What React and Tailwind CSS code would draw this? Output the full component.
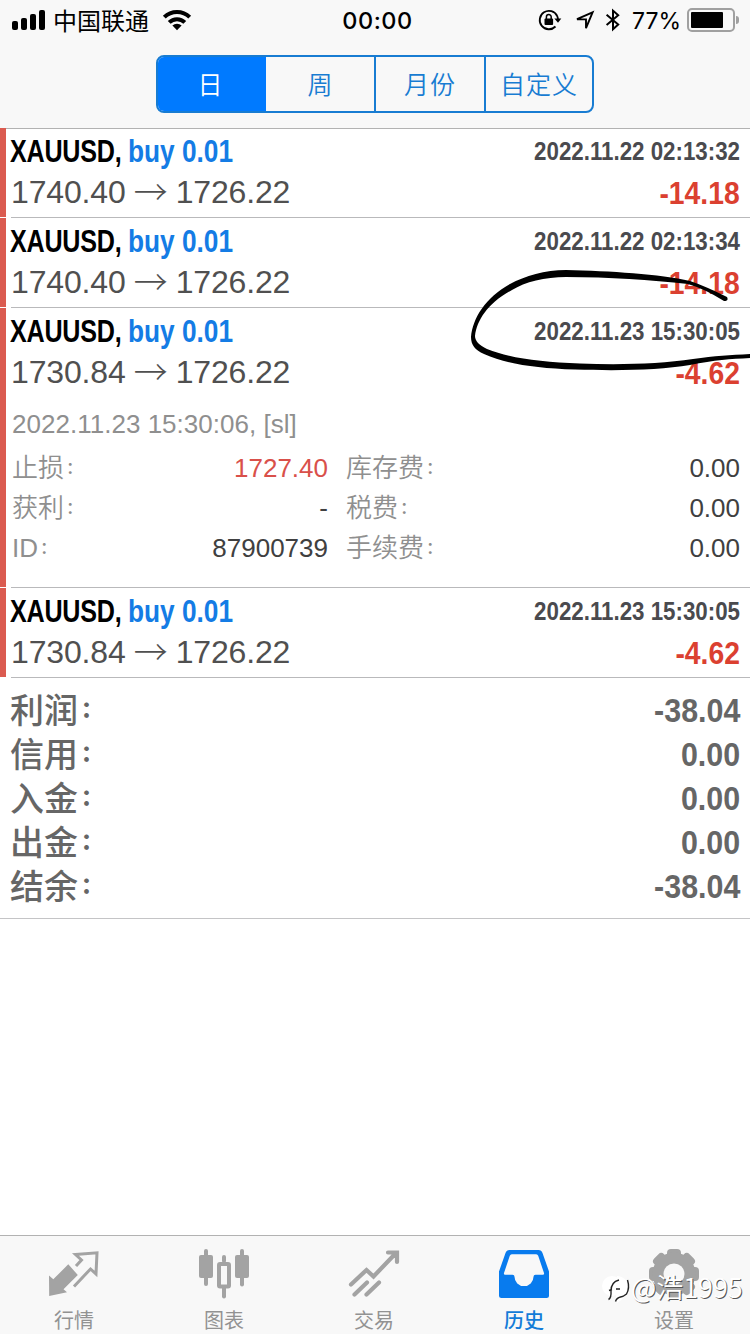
import React from 'react';

const CJK = "font-['Noto_Sans_CJK_SC',sans-serif]";
const LATIN = "font-['Liberation_Sans','Noto_Sans_CJK_SC',sans-serif]";

function StatusBar() {
  return (
    <div className="flex h-[40px] items-center pl-[12px] pr-[11px] text-black">
      <div className="flex flex-1 items-center">
        <div className="flex h-[20px] items-end gap-[3px]">
          <i className="h-[9px] w-[6px] rounded-[2px] bg-black" />
          <i className="h-[12px] w-[6px] rounded-[2px] bg-black" />
          <i className="h-[16px] w-[6px] rounded-[2px] bg-black" />
          <i className="h-[20px] w-[6px] rounded-[2px] bg-black" />
        </div>
        <span className={`ml-[8px] text-[24px] leading-[40px] ${CJK}`}>中国联通</span>
        <svg className="ml-[13px]" width="30" height="22" viewBox="0 0 30 22" fill="none" stroke="#000" strokeWidth="4">
          <path d="M2.3 8.2a18 18 0 0 1 25.4 0" />
          <path d="M7.2 13.4a11 11 0 0 1 15.6 0" />
          <path d="M10.4 16.5a6.6 6.6 0 0 1 9.2 0L15 21.3Z" fill="#000" stroke="none" />
        </svg>
      </div>
      <span className="ml-[4px] pt-[2px] font-[Inter,sans-serif] text-[23.5px] font-medium leading-[40px] tracking-[0.5px]">00:00</span>
      <div className="flex flex-1 items-center justify-end">
        <svg width="24" height="22" viewBox="0 0 24 22" fill="none" stroke="#000" strokeWidth="1.8">
          <path d="M19.2 7A9.2 9.2 0 1 0 17.5 17.5M19.2 7q.8 1.8.8 4" />
          <path d="M16.3 9.4h7L20 13.8Z" fill="#000" stroke="none" />
          <rect x="6.5" y="9.5" width="8.6" height="6.5" rx="1" fill="#000" stroke="none" />
          <path d="M8.4 10V8a2.4 2.4 0 0 1 4.8 0v2" strokeWidth="1.5" />
        </svg>
        <svg className="ml-[13px]" width="20" height="20" viewBox="0 0 20 20" fill="none" stroke="#000" strokeWidth="1.9" strokeLinejoin="miter">
          <path d="M2 9.2 17.6 2.4 11 18.200V9.400Z" />
        </svg>
        <svg className="ml-[10px]" width="16" height="24" viewBox="0 0 16 24" fill="none" stroke="#000" strokeWidth="2">
          <path d="M1.6 6.8 13.2 16.6 8 21.2V2.6l5.2 4.6L1.6 17" />
        </svg>
        <span className="ml-[11px] pt-[2px] font-[Inter,sans-serif] text-[23px] leading-[40px]">77%</span>
        <div className="ml-[6px] flex h-[24px] w-[48px] rounded-[5px] border-2 border-[#a0a0a0] p-[2px]">
          <i className="h-full w-[32px] rounded-[1px] bg-black" />
        </div>
        <i className="ml-[1px] h-[8px] w-[3px] rounded-r-full bg-[#a0a0a0]" />
      </div>
    </div>
  );
}

function Segments() {
  return (
    <div className={`mx-auto mt-[15px] flex h-[58px] w-[438px] overflow-hidden rounded-[8px] border-2 border-[#187cd2] text-[25px] font-[350] leading-[52px] text-[#187cd2] ${CJK}`}>
      <span className="w-[108px] shrink-0 bg-[#007aff] pr-[4px] text-center text-white">日</span>
      <span className="w-[108px] shrink-0 text-center">周</span>
      <span className="w-[110px] shrink-0 border-l-2 border-[#187cd2] text-center tracking-[1px]">月份</span>
      <span className="w-[108px] shrink-0 border-l-2 border-[#187cd2] text-center tracking-[1px]">自定义</span>
    </div>
  );
}

function Trade({ open, close, time, profit, children }) {
  return (
    <div className="flex">
      <i className="mb-px w-[6px] shrink-0 bg-[#db5b50]" />
      <div className="ml-[5px] flex-1 border-b border-[#b9b9bb]">
        <div className="flex h-[89px] justify-between pr-[10px]">
          <div className="-ml-px pt-[3px]">
            <div className="flex h-[40px] text-[32px] font-bold leading-[40px]">
              <span className="w-[118px] origin-left scale-x-[0.785] whitespace-nowrap tracking-[-0.3px] text-black">XAUUSD,</span>
              <span className="origin-left scale-x-[0.82] whitespace-nowrap text-[#147ce5]">buy 0.01</span>
            </div>
            <div className="flex h-[40px] pl-px text-[32px] leading-[42px] tracking-[-0.15px] text-[#505050]">
              <span>{open}</span>
              <span className="mx-[8px] w-[34px] text-center font-['Noto_Sans_CJK_SC'] text-[34px] font-light leading-[40px]">→</span>
              <span>{close}</span>
            </div>
          </div>
          <div className="flex flex-col items-end pt-[3px] font-bold">
            <span className="origin-right scale-x-[0.858] text-[26px] leading-[40px] text-[#4a4a4e]">{time}</span>
            <span className="origin-right scale-x-[0.885] text-[32px] leading-[44px] text-[#db4030]">{profit}</span>
          </div>
        </div>
        {children}
      </div>
    </div>
  );
}

function Field({ name, value, tone }) {
  return (
    <div className="flex h-[40px] justify-between text-[26px] leading-[40px]">
      <span className="flex font-[350] text-[#8f8f8f]">
        {name}
        <b className="ml-[2px] pt-[4px] text-[17px] font-medium leading-[34px]">：</b>
      </span>
      <span className={tone}>{value}</span>
    </div>
  );
}

function Details() {
  return (
    <div className="h-[190px] pl-px pr-[10px] pt-[7px]">
      <div className="text-[26px] leading-[40px] tracking-[0.02px] text-[#8f8f8f]">2022.11.23 15:30:06, [sl]</div>
      <div className="mt-[4px] flex gap-[18px]">
        <div className="w-[316px]">
          <Field name="止损" value="1727.40" tone="text-[#d9504a]" />
          <Field name="获利" value="-" tone="text-[#404040]" />
          <Field name="ID" value="87900739" tone="text-[#404040]" />
        </div>
        <div className="flex-1">
          <Field name="库存费" value="0.00" tone="text-[#404040]" />
          <Field name="税费" value="0.00" tone="text-[#404040]" />
          <Field name="手续费" value="0.00" tone="text-[#404040]" />
        </div>
      </div>
    </div>
  );
}

const totals = [
  ['利润', '-38.04'],
  ['信用', '0.00'],
  ['入金', '0.00'],
  ['出金', '0.00'],
  ['结余', '-38.04'],
];

function QuotesIcon() {
  return (
    <svg className="shrink-0" width="52" height="50" viewBox="0 0 52 50">
      <path d="M1 26.500 5.300 30.300 20.300 15.300 29.800 26 15.500 40.300 19 43.300 1.200 47Z" fill="#a3a3a3" />
      <path d="M28 17 33.500 11 27.500 5.500 49 3.800 48 25 42.500 20 26 37.500" fill="none" stroke="#a3a3a3" strokeWidth="3" />
    </svg>
  );
}

function CandlesIcon() {
  return (
    <svg className="shrink-0" width="52" height="50" viewBox="0 0 52 50" fill="#a3a3a3">
      <rect x="6" y="0" width="4" height="37" rx="2" />
      <rect x="1" y="6" width="14" height="23" rx="2" />
      <rect x="42" y="0" width="4" height="37.5" rx="2" />
      <rect x="37" y="6" width="14" height="23" rx="2" />
      <rect x="24" y="6" width="4" height="8" rx="2" />
      <rect x="24" y="37" width="4" height="12.500" rx="2" />
      <rect x="21" y="15" width="10" height="22.500" rx="1" fill="none" stroke="#a3a3a3" strokeWidth="4" />
    </svg>
  );
}

function TradeIcon() {
  return (
    <svg className="shrink-0" width="52" height="50" viewBox="0 0 52 50" fill="none" stroke="#a3a3a3" strokeWidth="4.2" strokeLinecap="round">
      <path d="M3 35.500 18.500 21l7 6.500L48 4M40 3.500h9V13M6.500 45.500 19 33.500M18.500 45.500 31 33.500" />
    </svg>
  );
}

function HistoryIcon() {
  return (
    <svg className="shrink-0" width="52" height="50" viewBox="0 0 52 50">
      <path fillRule="evenodd" fill="#087bee" d="M11.500 1h29q3 0 4 3L51 22.500v24q0 2.500-2.500 2.500h-45Q1 49 1 46.500v-24L7.500 4Q8.500 1 11.500 1ZM13.800 5.200q-1.500 0-2 1.500L6 24q-.5 1.800 1.200 1.800h7.300q2 0 2 2a9.500 9.300 0 0 0 19 0q0-2 2-2h7.300q1.700 0 1.200-1.800L40.200 6.700q-.5-1.500-2-1.500Z" />
    </svg>
  );
}

function GearIcon() {
  return (
    <svg className="shrink-0" width="52" height="50" viewBox="0 0 52 50">
      <g fill="#a3a3a3">
        <rect x="19" y="0" width="14" height="50" rx="4" />
        <rect x="19" y="0" width="14" height="50" rx="4" transform="rotate(45 26 25)" />
        <rect x="19" y="0" width="14" height="50" rx="4" transform="rotate(90 26 25)" />
        <rect x="19" y="0" width="14" height="50" rx="4" transform="rotate(135 26 25)" />
        <circle cx="26" cy="25" r="21.500" />
      </g>
      <circle cx="26" cy="25" r="10.500" fill="#f8f8f8" />
    </svg>
  );
}

const tabs = [
  ['行情', QuotesIcon],
  ['图表', CandlesIcon],
  ['交易', TradeIcon],
  ['历史', HistoryIcon],
  ['设置', GearIcon],
];

export default function App() {
  return (
    <div className={`relative flex h-[1334px] w-[750px] flex-col overflow-hidden bg-white ${LATIN}`}>
      <header className="h-[129px] shrink-0 border-b border-[#b2b2b2] bg-[#f8f8f8]">
        <StatusBar />
        <Segments />
      </header>

      <main className="-mt-px flex-1">
        <Trade open="1740.40" close="1726.22" time="2022.11.22 02:13:32" profit="-14.18" />
        <Trade open="1740.40" close="1726.22" time="2022.11.22 02:13:34" profit="-14.18" />
        <Trade open="1730.84" close="1726.22" time="2022.11.23 15:30:05" profit="-4.62">
          <Details />
        </Trade>
        <Trade open="1730.84" close="1726.22" time="2022.11.23 15:30:05" profit="-4.62" />
        <section className="h-[241px] border-b border-[#c4c4c6] pl-[10px] pr-[10px] pt-[10px] text-[#666]">
          {totals.map(([name, value]) => (
            <div key={name} className="flex h-[44px] justify-between text-[34px] leading-[44px]">
              <span className={`flex font-medium leading-[42px] ${CJK}`}>
                {name}
                <b className="ml-[3px] text-[22px] font-black leading-[38px]">：</b>
              </span>
              <span className="origin-right scale-x-[0.895] font-bold">{value}</span>
            </div>
          ))}
        </section>
      </main>

      <nav className="flex h-[99px] shrink-0 border-t border-[#b2b2b2] bg-[#f8f8f8]">
        {tabs.map(([name, Icon], i) => (
          <div key={name} className="flex w-[150px] flex-col items-center pr-[2px] pt-[13px]">
            <Icon />
            <span className={`mt-[6px] text-[20px] leading-[29px] ${CJK} ${i === 3 ? 'font-medium text-[#147cd8]' : 'text-[#929292]'}`}>{name}</span>
          </div>
        ))}
      </nav>

      <svg className="absolute left-[460px] top-[260px]" width="290" height="120" viewBox="460 260 290 120">
        <path d="M727 297Q705 286 690 281C660 274 610 271 566 270C545 270 525 276 510 284C485 298 473 318 471 337C471 345 475 350 484 354C507 364 535 368 575 369.500C620 371 660 370 690 365C715 360 730 359 750 358V354C730 355 715 356 693 359C660 364 620 365 580 363.500C540 362 510 358 487 349C479 345 475 341 475 336C477 320 488 303 512 290C525 282 545 277 566 277C610 277 650 280 688 284Q705 289 724 301Q729 301 727 297Z" />
      </svg>

      <div className="absolute left-[602px] top-[1268px] flex items-center text-white">
        <svg width="29" height="38" viewBox="0 0 29 38" fill="none">
          <circle cx="10" cy="18" r="10" fill="#fff" />
          <path d="M15 8a11 11 0 0 1 11 12q-1 9-11 15l-1-6Z" fill="#fff" />
          <path d="M25.500 12q2.500 8-1 14-3 2.500-6 3-4 1-5 4.500M6.500 31.500Q9.500 30 9 23q0-9 8-11M7 22.500l3-1M14 21h4" stroke="#222" strokeWidth="1.400" />
        </svg>
        <span className={`text-[27px] leading-[38px] [text-shadow:1px_1px_0_#555] ${CJK} font-[350]`}>@浩1995</span>
      </div>
    </div>
  );
}
